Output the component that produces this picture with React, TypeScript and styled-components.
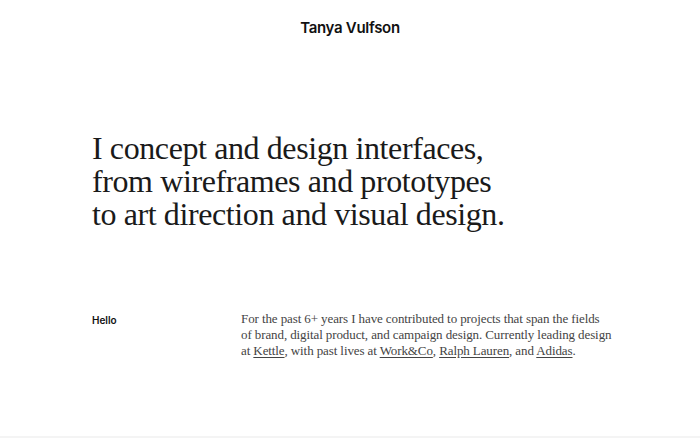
import styled, { createGlobalStyle } from "styled-components";

const Global = createGlobalStyle`
  html, body { margin: 0; padding: 0; background: #fff; }
  body { font-family: "Liberation Serif", serif; }
`;

export default function App() {
  return (
    <Page>
      <Global />
      <Header>
        <Name>Tanya Vulfson</Name>
      </Header>

      <Hero>
        <Headline>
          I concept and design interfaces,
          <br />
          from wireframes and prototypes
          <br />
          to art direction and visual design.
        </Headline>
      </Hero>

      <Intro>
        <Label>Hello</Label>
        <Body>
          For the past 6+ years I have contributed to projects that span the fields
          <br />
          of brand, digital product, and campaign design. Currently leading design
          <br />
          at <Link href="#">Kettle</Link>, with past lives at <Link href="#">Work&amp;Co</Link>,{" "}
          <Link href="#">Ralph Lauren</Link>, and <Link href="#">Adidas</Link>.
        </Body>
      </Intro>
      <Footer />
    </Page>
  );
}

/* ===== layout ===== */

const Page = styled.div`
  height: 438px;
  display: flex;
  flex-direction: column;
  overflow: hidden;
`;

const Header = styled.header`
  display: flex;
  justify-content: center;
  padding-top: 18px;
`;

const Name = styled.div`
  font-family: Inter, "Liberation Sans", sans-serif;
  font-weight: 600;
  font-size: 15px;
  letter-spacing: -0.3px;
  color: #111;
`;

/* ===== hero ===== */

const Hero = styled.section`
  padding: 95px 0 0 92px;
`;

const Headline = styled.h1`
  margin: 0;
  font-family: "Liberation Serif", serif;
  font-weight: 400;
  font-size: 32px;
  line-height: 33px;
  letter-spacing: -0.4px;
  color: #1a1a1a;
`;

/* ===== intro ===== */

const Intro = styled.section`
  display: grid;
  grid-template-columns: 149px 400px;
  padding: 80px 0 0 92px;
`;

const Label = styled.div`
  font-family: Inter, "Liberation Sans", sans-serif;
  font-weight: 600;
  font-size: 10px;
  padding-top: 3px;
  color: #111;
`;

const Body = styled.p`
  margin: 0;
  font-size: 13px;
  line-height: 16px;
  letter-spacing: -0.1px;
  color: #444;
`;

const Link = styled.a`
  color: inherit;
  text-decoration: underline;
  text-decoration-thickness: 1px;
  text-underline-offset: 2px;
`;

const Footer = styled.div`
  margin-top: auto;
  height: 2px;
  background: #f4f4f4;
`;
